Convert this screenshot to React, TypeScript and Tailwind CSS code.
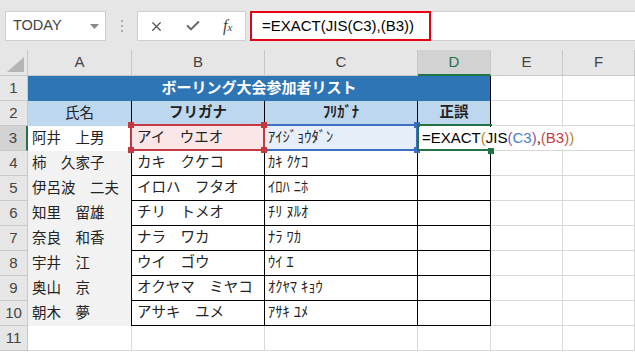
import React from "react";
import { X, Check } from "lucide-react";

/* ── Data ───────────────────────────────────────────────────────── */
const COLS = ["A", "B", "C", "D", "E", "F"];

const PEOPLE: [string, string, string][] = [
  ["阿井　上男", "アイ　ウエオ", "ｱｲｼﾞｮｳﾀﾞﾝ"],
  ["柿　久家子", "カキ　クケコ", "ｶｷ ｸｹｺ"],
  ["伊呂波　二夫", "イロハ　フタオ", "ｲﾛﾊ ﾆﾎ"],
  ["知里　留雄", "チリ　トメオ", "ﾁﾘ ﾇﾙｵ"],
  ["奈良　和香", "ナラ　ワカ", "ﾅﾗ ﾜｶ"],
  ["宇井　江", "ウイ　ゴウ", "ｳｲ ｴ"],
  ["奥山　京", "オクヤマ　ミヤコ", "ｵｸﾔﾏ ｷｮｳ"],
  ["朝木　夢", "アサキ　ユメ", "ｱｻｷ ﾕﾒ"],
];

/* ── Small pieces ───────────────────────────────────────────────── */
function RowHead({ n, active }: { n: number; active?: boolean }) {
  return (
    <div
      className={`flex items-center justify-center border-b border-[#c8c8c8] text-[15px] text-[#444] ${
        active ? "bg-[#d2d2d2] border-r-2 border-r-[#217346]" : "bg-[#e6e6e6] border-r border-r-[#c8c8c8]"
      }`}
    >
      {n}
    </div>
  );
}

function Grid() {
  return <div className="border-r border-b border-[#d9d9d9] bg-white" />;
}

function Corners({ color }: { color: string }) {
  return (
    <>
      <span className={`absolute -left-[4px] -top-[4px] w-[6px] h-[6px] ${color}`} />
      <span className={`absolute -right-[4px] -top-[4px] w-[6px] h-[6px] ${color}`} />
      <span className={`absolute -left-[4px] -bottom-[4px] w-[6px] h-[6px] ${color}`} />
      <span className={`absolute -right-[4px] -bottom-[4px] w-[6px] h-[6px] ${color}`} />
    </>
  );
}

/* ── App ────────────────────────────────────────────────────────── */
export default function App() {
  return (
    <div className="w-[635px] h-[352px] overflow-hidden bg-white font-['Liberation_Sans','Noto_Sans_CJK_JP',sans-serif] text-[#222]">
      {/* Formula bar */}
      <div className="h-[50px] bg-[#e6e6e6] flex items-start pt-[11px]">
        <div className="ml-[5px] w-[101px] h-[30px] bg-white border border-[#cfcfcf] flex items-center justify-between pl-[7px] pr-[6px]">
          <span className="text-[14.5px] text-[#444]">TODAY</span>
          <svg width="9" height="5" viewBox="0 0 9 5">
            <polygon points="0,0 9,0 4.5,5" fill="#888" />
          </svg>
        </div>
        <div className="w-[31px] h-[30px] flex flex-col items-center justify-center gap-[3px]">
          <span className="w-[2px] h-[2px] bg-[#aaa]" />
          <span className="w-[2px] h-[2px] bg-[#aaa]" />
          <span className="w-[2px] h-[2px] bg-[#aaa]" />
        </div>
        <div className="w-[109px] h-[30px] bg-white border border-[#cfcfcf] flex items-center pl-[11px]">
          <X className="w-[15px] h-[15px] text-[#555]" strokeWidth={2} />
          <Check className="ml-[21px] w-[16px] h-[16px] text-[#666]" strokeWidth={3} />
          <span className="ml-[22px] font-['Liberation_Serif',serif] italic text-[16px] text-[#444] leading-none">
            f<span className="text-[11px]">x</span>
          </span>
        </div>
        <div className="ml-[4px] flex-1 h-[30px] bg-white border-y border-[#cfcfcf]">
          <div className="w-[181px] h-[30px] -mt-px border-2 border-[#e60012] flex items-center pl-[10px] text-[15px] text-black">
            =EXACT(JIS(C3),(B3))
          </div>
        </div>
      </div>

      {/* Sheet */}
      <div className="grid grid-cols-[28px_104px_133px_153px_73px_72px_72px] grid-rows-[26px_repeat(11,25px)]">
        {/* Column headers */}
        <div className="bg-[#e6e6e6] border-r border-b border-[#c8c8c8] flex items-end justify-end p-[3px]">
          <svg width="17" height="15" viewBox="0 0 17 15">
            <polygon points="17,0 17,15 0,15" fill="#b5b5b5" />
          </svg>
        </div>
        {COLS.map((c) =>
          c === "D" ? (
            <div
              key={c}
              className="flex items-center justify-center bg-[#d2d2d2] border-r border-r-[#c8c8c8] border-b-2 border-b-[#217346] text-[15px] text-[#217346]"
            >
              {c}
            </div>
          ) : (
            <div
              key={c}
              className="flex items-center justify-center bg-[#e6e6e6] border-r border-b border-[#c8c8c8] text-[15px] text-[#444]"
            >
              {c}
            </div>
          )
        )}

        {/* Row 1 – title */}
        <RowHead n={1} />
        <div className="col-span-4 bg-[#2e75b6] border-r border-black flex items-center justify-center text-white font-bold text-[15px]">
          ボーリング大会参加者リスト
        </div>
        <Grid />
        <Grid />

        {/* Row 2 – headers */}
        <RowHead n={2} />
        <div className="bg-[#bdd7ee] border-r border-black flex items-center justify-center text-[14.5px]">氏名</div>
        <div className="bg-[#bdd7ee] border-r border-b border-black flex items-center justify-center text-[14.5px] font-bold">
          フリガナ
        </div>
        <div className="bg-[#bdd7ee] border-r border-b border-black flex items-center justify-center text-[14.5px] font-bold">
          ﾌﾘｶﾞﾅ
        </div>
        <div className="bg-[#bdd7ee] border-r border-b border-black flex items-center justify-center text-[14.5px] font-bold">
          正誤
        </div>
        <Grid />
        <Grid />

        {/* Rows 3–10 */}
        {PEOPLE.map(([name, kana, half], i) => {
          const row = i + 3;
          const first = row === 3;
          return (
            <React.Fragment key={row}>
              <RowHead n={row} active={first} />
              <div
                className={`border-r border-black flex items-center pl-[4px] text-[14.5px] whitespace-nowrap ${
                  first ? "bg-white" : "bg-[#f2f2f2]"
                }`}
              >
                {name}
              </div>
              <div
                className={`relative border-r border-b border-black flex items-center pl-[5px] text-[14.5px] whitespace-nowrap ${
                  first ? "bg-[#fbe6e7]" : "bg-white"
                }`}
              >
                {kana}
                {first && (
                  <div className="absolute -left-[2px] -top-[2px] w-[135px] h-[27px] border-2 border-[#c4383f] z-20">
                    <Corners color="bg-[#c4383f]" />
                  </div>
                )}
              </div>
              <div
                className={`relative border-r border-b border-black flex items-center pl-[3px] text-[14.5px] whitespace-nowrap ${
                  first ? "bg-[#e6eef9]" : "bg-white"
                }`}
              >
                {half}
                {first && (
                  <div className="absolute -left-[2px] -top-[2px] w-[155px] h-[27px] border-2 border-[#3c6fc3] z-10">
                    <Corners color="bg-[#3c6fc3]" />
                  </div>
                )}
              </div>
              <div className="relative border-r border-b border-black bg-white">
                {first && (
                  <>
                    <div className="absolute -left-px -top-[2px] w-[75px] h-[27px] border-2 border-r-0 border-[#217346] z-10" />
                    <div className="absolute left-[1px] top-[1px] h-[22px] w-[157px] bg-white z-20 flex items-center pl-[3px] text-[15px] whitespace-nowrap">
                      <span className="text-black">=EXACT</span>
                      <span className="text-[#b08a1a]">(</span>
                      <span className="text-black">JIS</span>
                      <span className="text-[#9b4fa8]">(</span>
                      <span className="text-[#4a7fd0]">C3</span>
                      <span className="text-[#9b4fa8]">)</span>
                      <span className="text-black">,</span>
                      <span className="text-[#c8505a]">(</span>
                      <span className="text-[#c8383f]">B3</span>
                      <span className="text-[#c8505a]">)</span>
                      <span className="text-[#b08a1a]">)</span>
                      <span className="ml-[3px] w-px h-[20px] bg-black" />
                    </div>
                    <span className="absolute -right-[4px] -bottom-[4px] w-[6px] h-[6px] bg-[#217346] z-30" />
                  </>
                )}
              </div>
              <Grid />
              <Grid />
            </React.Fragment>
          );
        })}

        {/* Row 11 */}
        <RowHead n={11} />
        <Grid />
        <Grid />
        <Grid />
        <Grid />
        <Grid />
        <Grid />
      </div>
    </div>
  );
}
